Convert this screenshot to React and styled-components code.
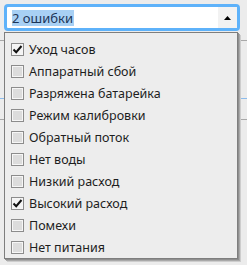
import React, { useState } from "react";
import styled, { createGlobalStyle } from "styled-components";

const GlobalStyle = createGlobalStyle`
    html, body {
        margin: 0;
        padding: 0;
        background: #ececec;
        font-family: "Noto Sans", "Open Sans", sans-serif;
        overflow: hidden;
    }
`;

const Page = styled.div`
    position: relative;
    width: 247px;
    height: 265px;
    padding-top: 4px;
    box-sizing: border-box;
`;

const Select = styled.div`
    margin-left: 4px;
    width: 236px;
    height: 27px;
    box-sizing: border-box;
    border: 3px solid #5eb2fa;
    border-radius: 4px;
    background: #ffffff;
    display: flex;
    align-items: stretch;
`;

const Value = styled.div`
    flex: 1;
    display: flex;
    align-items: center;
    padding-left: 5px;
    font-size: 13px;
    & > span {
        background: #a8d0f4;
        color: #1d3557;
        line-height: 16px;
        padding-right: 1px;
    }
`;

const ArrowButton = styled.div`
    width: 19px;
    background: #f2f2f2;
    display: flex;
    align-items: center;
    justify-content: center;
`;

const Backdrop = styled.div`
    display: flex;
    flex-direction: column;
`;

const Rule = styled.div`
    height: 1px;
    margin-top: ${({gap}) => gap}px;
    background: ${({blue}) => blue ? "#8cbcec" : "#a8a8a8"};
`;

const FocusBox = styled.div`
    margin-top: 19px;
    margin-left: 52px;
    width: 186px;
    height: 123px;
    box-sizing: border-box;
    border: 1px solid #8fc0f2;
    border-radius: 3px;
`;

const Dropdown = styled.ul`
    position: absolute;
    left: 4px;
    top: 32px;
    width: 234px;
    height: 227px;
    box-sizing: border-box;
    margin: 0;
    padding: 5px 0 0;
    list-style: none;
    background: #ededed;
    border: 1px solid #7e7e7e;
    box-shadow: 1px 1px 0 #8f8f8f, 2px 2px 0 #a9a9a9, 3px 3px 0 #cdcdcd;
`;

const Item = styled.li`
    height: 22px;
    display: flex;
    align-items: center;
    gap: 5px;
    padding-left: 6px;
    font-size: 12.5px;
    color: #1e1e1e;
    cursor: default;
`;

const Box = styled.span`
    width: 13px;
    height: 13px;
    box-sizing: border-box;
    border: 1px solid #8c8c8c;
    box-shadow: inset 0 0 0 1px #f6f6f6;
    display: flex;
    align-items: center;
    justify-content: center;
    background: ${({checked}) => checked ? "#f4f4f4" : "#dcdcdc"};
`;

const options = [
    ["Уход часов", true],
    ["Аппаратный сбой", false],
    ["Разряжена батарейка", false],
    ["Режим калибровки", false],
    ["Обратный поток", false],
    ["Нет воды", false],
    ["Низкий расход", false],
    ["Высокий расход", true],
    ["Помехи", false],
    ["Нет питания", false],
];

export default function App (){
    const [checked, setChecked] = useState(options.map((o) => o[1]));
    const count = checked.filter(Boolean).length;

    function toggle (i){
        setChecked((prev) => prev.map((c, j) => j === i ? !c : c));
    }

    return (
        <Page>
            <GlobalStyle />
            <Select>
                <Value><span>{count} ошибки</span></Value>
                <ArrowButton>
                    <svg width="7" height="4" viewBox="0 0 7 4">
                        <path d="M0 4 L3.5 0 L7 4 Z" fill="#000" />
                    </svg>
                </ArrowButton>
            </Select>
            <Backdrop>
                <Rule gap={9} />
                <Rule gap={57} blue />
                <Rule gap={20} />
                <FocusBox />
            </Backdrop>
            <Dropdown>
                {options.map(([label], i) => (
                    <Item key={label} onClick={() => toggle(i)}>
                        <Box checked={checked[i]}>
                            {checked[i] && (
                                <svg width="11" height="11" viewBox="0 0 11 11">
                                    <path d="M1.5 5.5 L4.2 8.2 L9.5 2" fill="none" stroke="#111" strokeWidth="2" />
                                </svg>
                            )}
                        </Box>
                        {label}
                    </Item>
                ))}
            </Dropdown>
        </Page>
    );
}
